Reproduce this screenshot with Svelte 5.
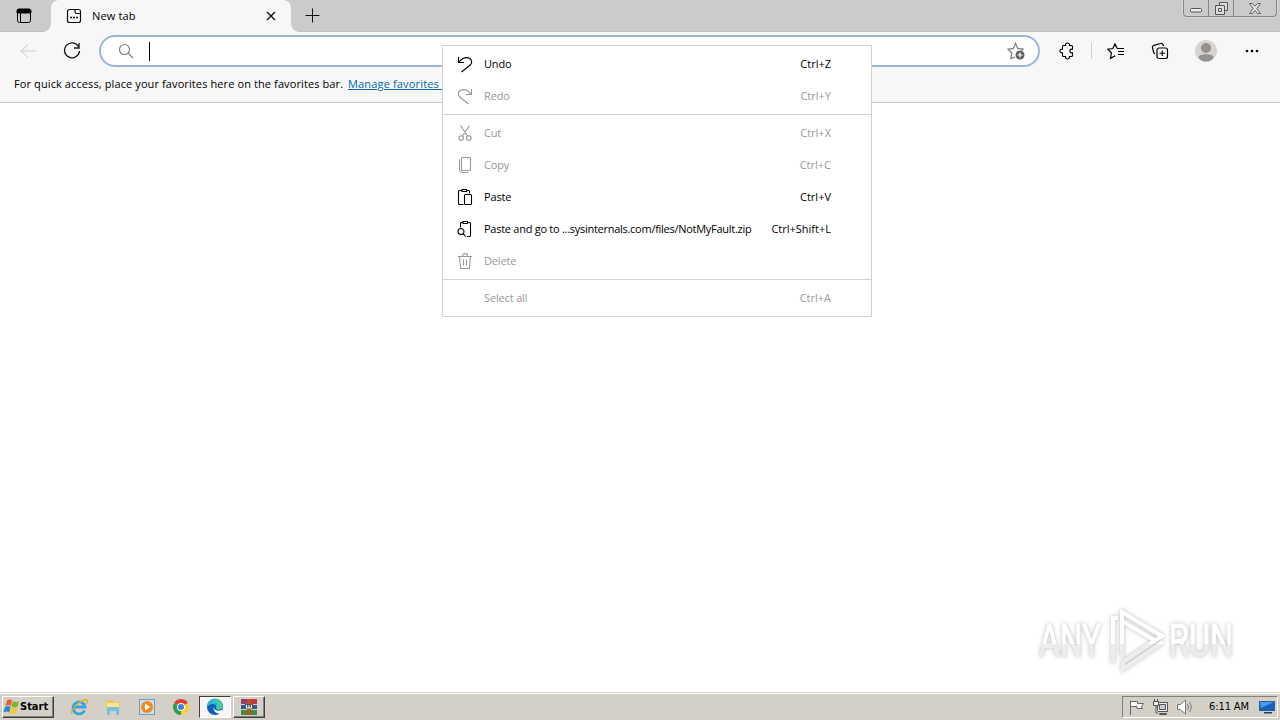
<script lang="ts">
  const menu = [
    [
      { icon: "undo", label: "Undo", keys: "Ctrl+Z", on: true },
      { icon: "redo", label: "Redo", keys: "Ctrl+Y", on: false },
    ],
    [
      { icon: "cut", label: "Cut", keys: "Ctrl+X", on: false },
      { icon: "copy", label: "Copy", keys: "Ctrl+C", on: false },
      { icon: "paste", label: "Paste", keys: "Ctrl+V", on: true },
      {
        icon: "pastego",
        label: "Paste and go to ...sysinternals.com/files/NotMyFault.zip",
        keys: "Ctrl+Shift+L",
        on: true,
      },
      { icon: "delete", label: "Delete", keys: "", on: false },
    ],
    [{ icon: "", label: "Select all", keys: "Ctrl+A", on: false }],
  ];

  const icons: Record<string, string> = {
    undo: "M1.5 1v5.5H7M1.8 6.2C4 3.500 6 1.600 9.500 1.600c4.500 0 6.500 4.200 4 7.200L4.500 16",
    redo: "M14.500 1v5.500H9M14.200 6.200C12 3.500 10 1.600 6.500 1.600c-4.500 0-6.500 4.200-4 7.200L11.500 16",
    cut: "M3.5.5l7.200 10.700M12.500.5L5.300 11.200M6.500 13a2.300 2.300 0 1 1-4.600 0a2.300 2.300 0 0 1 4.600 0zM14.100 13a2.300 2.300 0 1 1-4.600 0a2.300 2.300 0 0 1 4.600 0z",
    copy: "M5.500.5h7a1 1 0 0 1 1 1v11a1 1 0 0 1-1 1h-7a1 1 0 0 1-1-1v-11a1 1 0 0 1 1-1zM2.500 2.500v10a3 3 0 0 0 3 3h6",
    paste: "M5 1.500H2.500a1 1 0 0 0-1 1v12a1 1 0 0 0 1 1h4M10 1.500h1.500a1 1 0 0 1 1 1v2M5 .5h4.500v2H5zM8.500 5.500h5a1 1 0 0 1 1 1v8a1 1 0 0 1-1 1h-5a1 1 0 0 1-1-1v-8a1 1 0 0 1 1-1z",
    pastego: "M6 1.500H4.500a1 1 0 0 0-1 1v4M10.500 1.500h2a1 1 0 0 1 1 1v12a1 1 0 0 1-1 1H10M6 .5h4.500v2H6zM7 10.500a3 3 0 1 1-6 0a3 3 0 0 1 6 0zM6.200 12.700l2.500 2.800",
    delete: "M.8 3.500h14.400M5.500 3.500v-1c0-2.500 5-2.500 5 0v1M2.500 3.500l1.200 12h8.600l1.200-12M6.500 6.500v6M9.500 6.500v6",
  };
</script>

<div class="screen">
  <header class="tabstrip">
    <svg class="tabmenu" width="16" height="16" viewBox="0 0 16 16">
      <rect x="1.500" y="1.500" width="13" height="13" rx="2" fill="none" stroke="#000" />
      <path d="M1 5V3a2 2 0 0 1 2-2h10a2 2 0 0 1 2 2v2zM4.500 5v9" stroke="#000" />
    </svg>
    <div class="tab">
      <svg width="16" height="16" viewBox="0 0 16 16" fill="none" stroke="#111" stroke-width="1.200">
        <path d="M9 1.500H3.500a2 2 0 0 0-2 2v9a2 2 0 0 0 2 2h9a2 2 0 0 0 2-2v-7H10L9 4zM9 1.500h3.500a2 2 0 0 1 2 2v2" />
        <path d="M4 9.500h2M7 9.500h2M10 9.500h2" stroke-width="1.500" />
      </svg>
      <span>New tab</span>
      <svg class="close" width="10" height="10" viewBox="0 0 10 10" stroke="#111" stroke-width="1.400">
        <path d="M1 1l8 8M9 1L1 9" />
      </svg>
    </div>
    <svg class="plus" width="15" height="15" viewBox="0 0 15 15" stroke="#111">
      <path d="M7.500.5v14M.5 7.500h14" />
    </svg>
    <div class="winbuttons">
      <span class="min">
        <svg width="12" height="6" viewBox="0 0 12 6"><rect x=".5" y="1.500" width="11" height="3.500" rx="1" fill="#eee" stroke="#555" /></svg>
      </span>
      <span class="max">
        <svg width="13" height="13" viewBox="0 0 13 13" fill="#ddd" stroke="#555">
          <path d="M4.500 .5h8v8h-8z" /><path d="M.5 3.500h9v9h-9z" /><path d="M3.500 6.500h3v3h-3z" />
        </svg>
      </span>
      <span class="x">
        <svg width="12" height="11" viewBox="0 0 12 11"><path d="M.5.5h3L6 3.300 8.500.5h3L7.800 5.500l3.700 5h-3L6 7.500l-2.500 3h-3l3.700-5z" fill="#e6e6e6" stroke="#555" stroke-width=".9" /></svg>
      </span>
    </div>
  </header>

  <div class="toolbar">
    <svg class="back" width="16" height="16" viewBox="0 0 16 16" fill="none" stroke="#ccc">
      <path d="M16 8H1M8 1.500L1 8l7 6.500" />
    </svg>
    <svg class="reload" width="18" height="18" viewBox="0 0 18 18" fill="none" stroke="#111" stroke-width="1.300">
      <path d="M15.500 4.500A7.500 7.500 0 1 0 16.500 9M16 1v5h-5" />
    </svg>
    <div class="omnibox">
      <svg class="search" width="16" height="16" viewBox="0 0 16 16" fill="none" stroke="#777" stroke-width="1.100">
        <circle cx="6.500" cy="6.500" r="5" /><path d="M10.200 10.200L15 15" />
      </svg>
      <i class="caret"></i>
      <svg class="staradd" width="18" height="18" viewBox="0 0 18 18" fill="none" stroke="#777" stroke-width="1.200">
        <path d="M8 15l-4 1.500.8-5.500L1 7.200l5.200-.8L8.500 1.500l2.300 4.900 5.200.8-1.200 1.300" />
        <circle cx="13" cy="13" r="4.500" fill="#606060" stroke="none" />
        <path d="M10.500 13h5M13 10.500v5" stroke="#fff" />
      </svg>
    </div>
    <svg class="puzzle" width="16" height="18" viewBox="0 0 16 18" fill="none" stroke="#000" stroke-width="1.100">
      <path d="M4.500 3.500h2c-.5-3.300 4.500-3.300 4 0h2a1 1 0 0 1 1 1v2.700c-3.500-.8-3.500 4.400 0 3.600v2.700a1 1 0 0 1-1 1h-2c.5 3.300-4.500 3.300-4 0h-2a1 1 0 0 1-1-1v-2.700c-3.500.5-3.500-4.100 0-3.600V4.500a1 1 0 0 1 1-1z" />
    </svg>
    <i class="divider"></i>
    <svg class="fav" width="18" height="18" viewBox="0 0 18 18" fill="none" stroke="#000" stroke-width="1.200">
      <path d="M10.200 6.500L8 2 5.900 6.500.8 7.200l3.600 3.600-.9 5.500 4.700-2.500M10 6.500h7M11 9.500h6M11 12.500h6" />
    </svg>
    <svg class="collections" width="18" height="18" viewBox="0 0 18 18" fill="none" stroke="#000" stroke-width="1.200">
      <path d="M12.500 4L12 2.500a2 2 0 0 0-2.500-1L3 3.300a2 2 0 0 0-1.500 2.500l1.200 4.700a2 2 0 0 0 1.300 1.300" />
      <rect x="6" y="6" width="10.500" height="10.500" rx="2" /><path d="M11.250 8.500v5.500M8.500 11.250h5.500" />
    </svg>
    <svg class="avatar" width="22" height="22" viewBox="0 0 22 22">
      <circle cx="11" cy="11" r="11" fill="#d6d4d3" /><circle cx="11" cy="8" r="5" fill="#93908e" />
      <path d="M3.500 17.500c0-4.500 15-4.500 15 0-1.500 2.500-4.500 4-7.500 4s-6-1.500-7.500-4z" fill="#93908e" />
    </svg>
    <svg class="dots" width="14" height="4" viewBox="0 0 14 4">
      <circle cx="2" cy="2" r="1.300" /><circle cx="7" cy="2" r="1.300" /><circle cx="12" cy="2" r="1.300" />
    </svg>
  </div>

  <div class="favorites">
    <span class="hint">For quick access, place your favorites here on the favorites bar.</span>
    <a href="#manage">Manage favorites now</a>
  </div>

  <main>
    <svg class="watermark" width="216" height="72" viewBox="0 0 216 72">
      <defs>
        <linearGradient id="shade" x2="0" y2="1">
          <stop offset=".56" stop-color="#fff" />
          <stop offset=".56" stop-color="#ededed" />
        </linearGradient>
      </defs>
      <g class="mark">
        <text x="6" y="52" textLength="62" lengthAdjust="spacingAndGlyphs">ANY</text>
        <text x="136" y="52" textLength="64" lengthAdjust="spacingAndGlyphs">RUN</text>
        <path d="M89 52V8L129 32 90 58v7l40-27M89 17l32 19M80 59V14h5" />
      </g>
    </svg>
  </main>

  <footer class="taskbar">
    <div class="start">
      <svg width="17" height="16" viewBox="0 0 17 16">
        <path d="M4 1.500q3-2 5 0L8 7Q5 5 2.500 7z" fill="#ed5b28" /><path d="M10 2q3 2 6 0l-1.500 5.500q-3 2-6 0z" fill="#76b82f" />
        <path d="M2 8q3-2 5.500 0l-1.300 5.500q-2.500-2-5.700 0z" fill="#2c87d2" /><path d="M8.300 8.500q3 2 6 0L13 14q-3 2-6 0z" fill="#f8c72c" />
      </svg>
      <b>Start</b>
    </div>
    <div class="task ie">
      <svg width="18" height="18" viewBox="0 0 18 18" fill="none">
        <path d="M14.500 12.500A6 6 0 1 1 15 9H4.500" stroke="#36a4df" stroke-width="2.800" />
        <path d="M2 16C-1 13 12 0 17 2c1 1 0 3-1 4" stroke="#e6ad25" stroke-width="1.300" />
      </svg>
    </div>
    <div class="task">
      <svg width="18" height="18" viewBox="0 0 18 18">
        <path d="M2 2h6l1 2h7v9H2z" fill="#edc85c" /><path d="M3 5h12v8H3z" fill="#fbe793" />
        <path d="M3 10q0-1 1-1h10q1 0 1 1v7h-3v-4H6v4H3z" fill="#74bfe2" />
      </svg>
    </div>
    <div class="task">
      <svg width="18" height="18" viewBox="0 0 18 18">
        <rect x="1.500" y="1.500" width="15" height="15" fill="#c7dff0" stroke="#6e9dc1" /><circle cx="9" cy="9" r="6" fill="#f48a13" /><path d="M7 5.500L12.500 9 7 12.500z" fill="#fff" />
      </svg>
    </div>
    <div class="task">
      <svg width="18" height="18" viewBox="0 0 18 18">
        <path d="M9 9L2.070 5A8 8 0 0 1 15.930 5z" fill="#df4030" /><path d="M9 9L15.930 5A8 8 0 0 1 9 17z" fill="#fcce34" /><path d="M9 9v8A8 8 0 0 1 2.070 5z" fill="#2ca04a" />
        <circle cx="9" cy="9" r="4" fill="#fff" /><circle cx="9" cy="9" r="3" fill="#3b7ee8" />
      </svg>
    </div>
    <div class="task active">
      <svg width="18" height="18" viewBox="0 0 18 18">
        <circle cx="9" cy="9" r="8" fill="#0d62b6" />
        <path d="M1 9a8 8 0 0 1 16-1c.3 4-6 4.500-7 2 1.500-1 0-4-3-4S2 7.500 1 9z" fill="#31b4d5" />
        <path d="M10 1a8 8 0 0 1 7 7c.3 4-6 4.500-7 2 2-2 1-5-2-6z" fill="#45c9a0" />
        <path d="M8 8c-1 3 2 6 8 4l2 1-2.800 3C11 16 6 13 8 8z" fill="#f7f6f4" />
      </svg>
    </div>
    <div class="task raised">
      <svg width="18" height="18" viewBox="0 0 18 18">
        <path d="M1 1h7v5H1z" fill="#963d65" /><path d="M9 1h8v5H9z" fill="#c23b3d" /><path d="M1 7h16v4H1z" fill="#3352a2" /><path d="M1 12h16v5H1z" fill="#3e8f3b" />
        <path d="M7 1h4v16H7z" fill="#b0552c" /><path d="M5 6h8v5H5z" fill="#555" /><path d="M6.500 7v3h5V7M9 7v3" fill="none" stroke="#fff" />
      </svg>
    </div>
    <div class="tray">
      <svg width="17" height="18" viewBox="0 0 17 18" fill="#fff" stroke="#666">
        <path d="M2.500 17V2.500M2.500 3.500h7v2h6l-2 3 1 2H9v-2H2.500z" />
      </svg>
      <svg class="net" width="17" height="18" viewBox="0 0 17 18" fill="#eee" stroke="#555">
        <path d="M5.500 4.500h10v9h-10zM7.500 15.500h7v1h-7z" /><path d="M7.500 6.500h6v5h-6z" fill="#ccc" /><path d="M1.500 3.500h5v4h-5zM2.500 1v2M5.500 1v2M4 8v7h2" />
      </svg>
      <svg class="sound" width="18" height="18" viewBox="0 0 18 18" fill="#fff" stroke="#777">
        <path d="M1.500 6.500h3l5-4.500v14l-5-4.500h-3z" /><path d="M11.500 6q2 3 0 6M13.500 4q3.500 5 0 10" fill="none" />
      </svg>
      <span class="clock">6:11 AM</span>
      <svg class="desktop" width="17" height="14" viewBox="0 0 17 14">
        <rect x=".5" y="1.500" width="15" height="9" fill="#1760bc" stroke="#24609c" /><path d="M1 2h14L2 8z" fill="#4b9be5" /><path d="M5 12h8v1.500H5z" fill="#1d3c68" />
      </svg>
    </div>
  </footer>

  <div class="menu">
    {#each menu as group}
      <div class="group">
        {#each group as item}
          <div class="item" class:on={item.on}>
            <svg width="16" height="17" viewBox="0 0 16 17">
              {#if item.icon}<path d={icons[item.icon]} />{/if}
            </svg>
            <span class="label" class:long={item.icon === "pastego"}>{item.label}</span>
            <span class="keys">{item.keys}</span>
          </div>
        {/each}
      </div>
    {/each}
  </div>
</div>

<style>
  :global(body) {
    overflow: hidden;
  }

  .screen {
    position: relative;
    display: flex;
    flex-direction: column;
    width: 1280px;
    height: 720px;
    background: #fff;
    font-family: "Open Sans", "Noto Sans", sans-serif;
    font-size: 11px;
    color: #000;
  }

  svg {
    display: block;
    flex: none;
  }

  .tabstrip {
    display: flex;
    height: 32px;
    background: #cbcbcb;
    border-bottom: 1px solid #c0c0c0;
    box-sizing: border-box;
  }

  .tabmenu {
    margin: 8px 0 0 16px;
  }

  .tab {
    position: relative;
    display: flex;
    align-items: center;
    width: 240px;
    height: 32px;
    box-sizing: border-box;
    margin-left: 19px;
    padding: 0 15px;
    border-radius: 8px 8px 0 0;
    background: #f7f7f7;
  }

  .tab::before,
  .tab::after {
    content: "";
    position: absolute;
    bottom: 0;
    width: 8px;
    height: 8px;
  }

  .tab::before {
    left: -8px;
    background: radial-gradient(circle at 0 0, transparent 7.5px, #f7f7f7 8px);
  }

  .tab::after {
    right: -8px;
    background: radial-gradient(circle at 100% 0, transparent 7.5px, #f7f7f7 8px);
  }

  .tab span {
    margin-left: 10px;
    padding-bottom: 2px;
    letter-spacing: 0.15px;
  }

  .close {
    margin-left: auto;
  }

  .plus {
    margin: 8px 0 0 14px;
  }

  .winbuttons {
    display: flex;
    height: 17px;
    box-sizing: border-box;
    margin: 0 3px 0 auto;
    border: 1px solid #858585;
    border-top: 0;
    border-radius: 0 0 4px 4px;
    box-shadow: 0 0 0 1px #d9d9d9;
  }

  .winbuttons span {
    display: flex;
    align-items: center;
    justify-content: center;
    width: 24px;
    border-right: 1px solid #858585;
  }

  .winbuttons .min {
    padding-top: 4px;
    box-sizing: border-box;
    width: 25px;
  }

  .winbuttons .x {
    width: 42px;
    border: 0;
  }

  .toolbar {
    display: flex;
    align-items: center;
    height: 38px;
    background: #f7f7f7;
  }

  .back {
    margin-left: 20px;
  }

  .reload {
    margin-left: 27px;
  }

  .omnibox {
    display: flex;
    align-items: center;
    width: 941px;
    height: 32px;
    box-sizing: border-box;
    margin-left: 18px;
    border: 2px solid #9cb4dc;
    border-radius: 16px;
    background: #fff;
  }

  .search {
    margin-left: 17px;
  }

  .caret {
    width: 1px;
    height: 19px;
    margin-left: 15px;
    background: #000;
  }

  .staradd {
    margin: 0 13px 0 auto;
  }

  .puzzle {
    margin-left: 19px;
  }

  .divider {
    width: 1px;
    height: 16px;
    margin-left: 16px;
    background: #d0d0d0;
  }

  .fav {
    margin-left: 15px;
  }

  .collections {
    margin-left: 26px;
  }

  .avatar {
    margin-left: 26px;
  }

  .dots {
    margin-left: 28px;
  }

  .favorites {
    display: flex;
    align-items: center;
    height: 33px;
    box-sizing: border-box;
    padding: 0 0 5px 14px;
    border-bottom: 1px solid #c4c4c4;
    background: #f7f7f7;
    white-space: nowrap;
  }

  .hint {
    width: 334px;
    letter-spacing: 0.105px;
  }

  .favorites a {
    color: #0067b0;
    letter-spacing: 0.16px;
  }

  main {
    display: flex;
    flex: 1;
    align-items: flex-end;
    justify-content: flex-end;
  }

  .watermark {
    margin: 0 31px 16px 0;
  }

  .mark {
    fill: url(#shade);
    filter: drop-shadow(0 0 2px #bbb);
    font: 44px "Roboto", sans-serif;
  }

  .mark text {
    stroke: url(#shade);
    stroke-width: 1;
  }

  .mark path {
    fill: none;
    stroke: url(#shade);
    stroke-width: 4;
  }

  .taskbar {
    display: flex;
    align-items: center;
    height: 28px;
    box-sizing: border-box;
    padding: 0 2px 0 2px;
    border-top: 1px solid #d4d0c8;
    background: #d4d0c8;
    box-shadow: inset 0 1px #fff;
  }

  .start {
    display: flex;
    align-items: center;
    width: 52px;
    height: 22px;
    box-sizing: border-box;
    border: 1px solid;
    border-color: #fff #404040 #404040 #fff;
    box-shadow: inset -1px -1px #808080;
    font-family: "DejaVu Sans Condensed", "DejaVu Sans", sans-serif;
    font-size: 11px;
    letter-spacing: 0;
  }

  .task {
    display: flex;
    align-items: center;
    justify-content: center;
    width: 32px;
    height: 22px;
    box-sizing: border-box;
    margin-right: 2px;
  }

  .ie {
    margin-left: 9px;
  }

  .active {
    border: 1px solid;
    border-color: #404040 #fff #fff #404040;
    background: #f7f6f4;
  }

  .raised {
    border: 1px solid;
    border-color: #fff #404040 #404040 #fff;
    box-shadow: inset -1px -1px #808080;
  }

  .tray {
    display: flex;
    align-items: center;
    width: 156px;
    height: 22px;
    box-sizing: border-box;
    margin-left: auto;
    padding-left: 5px;
    border: 1px solid;
    border-color: #808080 #fff #fff #808080;
  }

  .net {
    margin-left: 7px;
  }

  .sound {
    margin-left: 7px;
  }

  .clock {
    width: 42px;
    margin-left: 15px;
    font-family: "DejaVu Sans Condensed", "DejaVu Sans", sans-serif;
    font-size: 11px;
    letter-spacing: -0.1px;
    white-space: nowrap;
  }

  .desktop {
    margin-left: 8px;
  }

  .menu {
    position: absolute;
    left: 442px;
    top: 45px;
    width: 430px;
    box-sizing: border-box;
    padding: 2px 0;
    border: 1px solid #d2d2d2;
    background: #fff;
  }

  .group + .group {
    margin-top: 2px;
    padding-top: 2px;
    border-top: 1px solid #d2d2d2;
  }

  .item {
    display: flex;
    align-items: center;
    height: 32px;
    padding: 0 40px 0 14px;
    color: #999;
    white-space: nowrap;
  }

  .item.on {
    color: #000;
  }

  .item path {
    fill: none;
    stroke: currentColor;
    stroke-width: 1.1;
  }

  .label {
    margin-left: 11px;
    padding-bottom: 2px;
    letter-spacing: -0.15px;
  }

  .label.long {
    letter-spacing: -0.27px;
  }

  .keys {
    margin-left: auto;
    padding-bottom: 2px;
  }
</style>
